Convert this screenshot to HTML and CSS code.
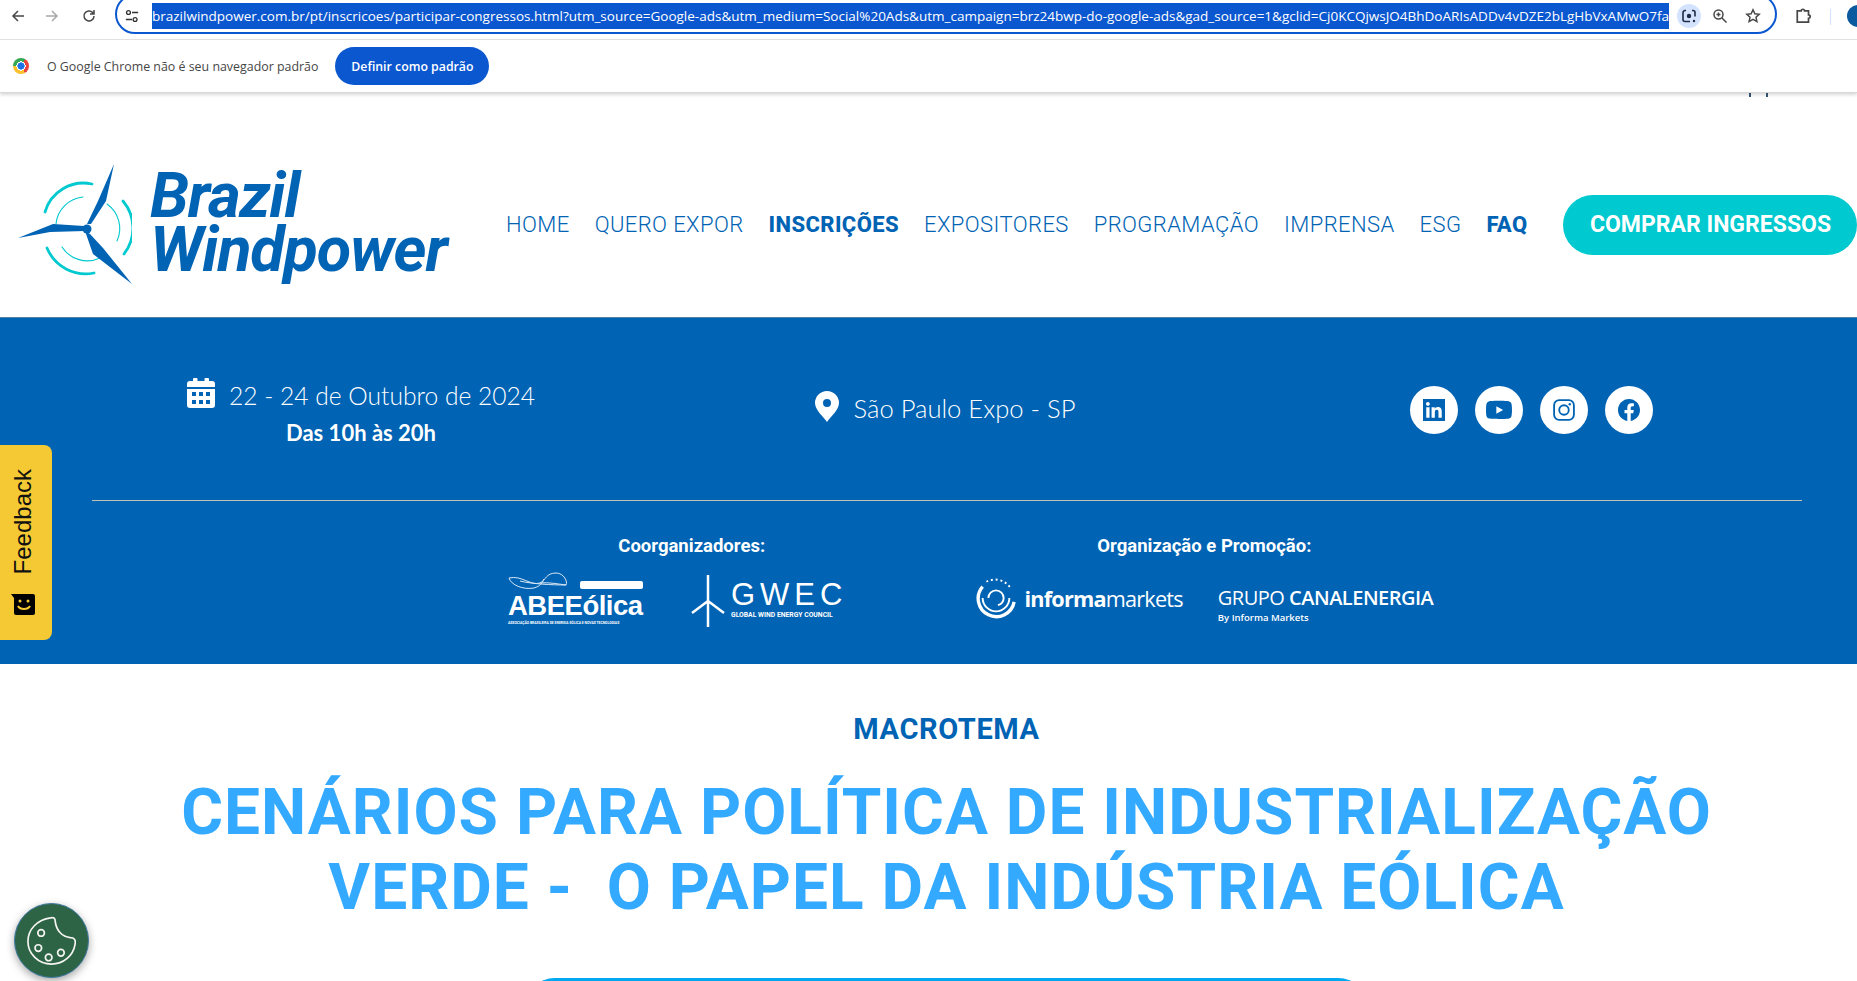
FILE: index.html
```html
<!DOCTYPE html>
<html lang="pt-BR">
<head>
    <meta charset="UTF-8">
    <title>Brazil Windpower</title>
    <link rel="stylesheet" href="styles.css">
</head>
<body>

    <!-- Browser toolbar -->
    <div class="toolbar">
        <svg class="tool-icon back" viewBox="0 0 16 16"><path d="M14 8H3M8 3 3 8l5 5"/></svg>
        <svg class="tool-icon forward" viewBox="0 0 16 16"><path d="M2 8h11M8 3l5 5-5 5"/></svg>
        <svg class="tool-icon reload" viewBox="0 0 16 16"><path d="M13 8a5 5 0 1 1-1.5-3.6L13 6M13 2v4H9"/></svg>
        <div class="address">
            <svg class="tune" viewBox="0 0 16 16"><path d="M8 4h7M1 12h7"/><circle cx="4" cy="4" r="2.200"/><circle cx="11.500" cy="12" r="2.200"/></svg>
            <span class="url"><span class="url-text">brazilwindpower.com.br/pt/inscricoes/participar-congressos.html?utm_source=Google-ads&amp;utm_medium=Social%20Ads&amp;utm_campaign=brz24bwp-do-google-ads&amp;gad_source=1&amp;gclid=Cj0KCQjwsJO4BhDoARIsADDv4vDZE2bLgHbVxAMwO7fa</span></span>
            <span class="lens">
                <svg viewBox="0 0 16 16"><path d="M5 2.500H4A2 2 0 0 0 2 4.500v7a2 2 0 0 0 2 2h1M11 2.500h1a2 2 0 0 1 2 2v4M9 13.500H5"/><circle cx="8" cy="8" r="2.200" class="fill"/><circle cx="13" cy="13" r="1.200" class="fill"/></svg>
            </span>
            <svg class="tool-icon zoom-icon" viewBox="0 0 16 16"><circle cx="6.500" cy="6.500" r="4.500"/><path d="m10 10 4.500 4.500M4.500 6.500h4M6.500 4.500v4"/></svg>
            <svg class="tool-icon star" viewBox="0 0 16 16"><path d="m8 1.800 1.900 4 4.300.5-3.200 3 .9 4.300L8 11.400l-3.900 2.200.9-4.300-3.200-3 4.300-.5z"/></svg>
        </div>
        <svg class="tool-icon puzzle" viewBox="0 0 16 16"><path d="M2 3.500h3.500a1.500 1.500 0 0 1 3 0H12V7a1.500 1.500 0 0 1 0 3v3.500H2z"/></svg>
        <span class="tool-sep"></span>
        <span class="avatar"></span>
    </div>

    <!-- Default browser prompt -->
    <div class="infobar">
        <span class="chrome-logo"></span>
        <span class="infobar-text">O Google Chrome não é seu navegador padrão</span>
        <button class="infobar-btn">Definir como padrão</button>
    </div>

    <!-- Site header -->
    <header class="site-header">
        <div class="peek"><span></span><span></span></div>
        <div class="logo">
            <svg class="logo-mark" viewBox="0 0 114 121">
                <g fill="none" stroke="#00c9cf" stroke-linecap="round">
                    <path d="M27 48A40 40 0 0 1 74 20" stroke-width="2.800"/>
                    <path d="M105 37A42 42 0 0 1 106 90" stroke-width="2.800" />
                    <path d="M29 84A42 42 0 0 0 76 109" stroke-width="2.800"/>
                    <path d="M38 60A30 30 0 0 1 65 33" stroke-width="1.100"/>
                    <path d="M89 40A30 30 0 0 1 99 77" stroke-width="1.100"/>
                    <path d="M44 83A30 30 0 0 0 82 94" stroke-width="1.100"/>
                </g>
                <g fill="#0063b4">
                    <path d="M96 0 88 37 73 60 69 60 80 37z"/>
                    <path d="M0 74 35 60 66 62 67 67 32 68z"/>
                    <path d="M114 120 85 84 72 70 67 67 75 90z"/>
                    <circle cx="69" cy="65" r="4.500"/>
                </g>
            </svg>
            <div class="logo-text">
                <div class="logo-line">Brazil</div>
                <div class="logo-line">Windpower</div>
            </div>
        </div>
        <nav class="nav">
            <a href="#">HOME</a>
            <a href="#">QUERO EXPOR</a>
            <a href="#" class="nav-strong">INSCRIÇÕES</a>
            <a href="#">EXPOSITORES</a>
            <a href="#">PROGRAMAÇÃO</a>
            <a href="#">IMPRENSA</a>
            <a href="#">ESG</a>
            <a href="#" class="nav-strong">FAQ</a>
        </nav>
        <a href="#" class="buy-btn">COMPRAR INGRESSOS</a>
    </header>

    <!-- Event band -->
    <section class="band">
        <div class="event-row">
            <div class="event-date">
                <div class="event-line">
                    <svg class="calendar" viewBox="0 0 28 30">
                        <path d="M7 0h2.500a1 1 0 0 1 1 1v2h7V1a1 1 0 0 1 1-1H21a1 1 0 0 1 1 1v2h3a3 3 0 0 1 3 3v3H0V6a3 3 0 0 1 3-3h3V1a1 1 0 0 1 1-1z"/>
                        <path fill-rule="evenodd" d="M0 11h28v16a3 3 0 0 1-3 3H3a3 3 0 0 1-3-3zM5 14v4h4v-4zm7 0v4h4v-4zm7 0v4h4v-4zM5 22v4h4v-4zm7 0v4h4v-4zm7 0v4h4v-4z"/>
                    </svg>
                    <span>22 - 24 de Outubro de 2024</span>
                </div>
                <div class="event-hours">Das 10h às 20h</div>
            </div>
            <div class="event-place">
                <svg class="pin" viewBox="0 0 24 31">
                    <path fill-rule="evenodd" d="M12 0a12 12 0 0 1 12 12c0 7-8 13-12 19C8 25 0 19 0 12A12 12 0 0 1 12 0zm0 8a4 4 0 1 0 0 8 4 4 0 0 0 0-8z"/>
                </svg>
                <span>São Paulo Expo - SP</span>
            </div>
            <div class="social">
                <a href="#" class="social-link"><svg viewBox="0 0 24 24"><path d="M20.447 20.452h-3.554v-5.569c0-1.328-.027-3.037-1.852-3.037-1.853 0-2.136 1.445-2.136 2.939v5.667H9.351V9h3.414v1.561h.046c.477-.9 1.637-1.850 3.370-1.850 3.601 0 4.267 2.370 4.267 5.455v6.286zM5.337 7.433c-1.144 0-2.063-.926-2.063-2.065 0-1.138.92-2.063 2.063-2.063 1.140 0 2.064.925 2.064 2.063 0 1.139-.925 2.065-2.064 2.065zm1.782 13.019H3.555V9h3.564v11.452zM24 0H0v24h24z" fill-rule="evenodd"/></svg></a>
                <a href="#" class="social-link"><svg viewBox="0 0 24 24" class="wide"><path d="M23.498 6.186a3.016 3.016 0 0 0-2.122-2.136C19.505 3.545 12 3.545 12 3.545s-7.505 0-9.377.505A3.017 3.017 0 0 0 .502 6.186C0 8.070 0 12 0 12s0 3.930.502 5.814a3.016 3.016 0 0 0 2.122 2.136c1.871.505 9.376.505 9.376.505s7.505 0 9.377-.505a3.015 3.015 0 0 0 2.122-2.136C24 15.930 24 12 24 12s0-3.930-.502-5.814zM9.545 15.568V8.432L15.818 12l-6.273 3.568z"/></svg></a>
                <a href="#" class="social-link"><svg viewBox="0 0 24 24" class="outline"><rect x="1.200" y="1.200" width="21.600" height="21.600" rx="5.500"/><circle cx="12" cy="12" r="5.200"/><circle cx="18.300" cy="5.700" r="1.300" class="fill"/></svg></a>
                <a href="#" class="social-link"><svg viewBox="0 0 24 24"><path d="M24 12.073c0-6.627-5.373-12-12-12s-12 5.373-12 12c0 5.990 4.388 10.954 10.125 11.854v-8.385H7.078v-3.470h3.047V9.430c0-3.007 1.792-4.669 4.533-4.669 1.312 0 2.686.235 2.686.235v2.953H15.830c-1.491 0-1.956.925-1.956 1.874v2.250h3.328l-.532 3.470h-2.796v8.385C19.612 23.027 24 18.062 24 12.073z"/></svg></a>
            </div>
        </div>

        <hr class="band-rule">

        <div class="partners">
            <div class="partner-group group-co">
                <div class="partner-label label-co">Coorganizadores:</div>
                <div class="partner-logos">
                    <div class="abee">
                        <div class="abee-top">
                            <svg class="abee-swoosh" viewBox="0 0 60 24">
                                <path d="M1 6C14 3 22 14 32 11 38 8 38 1 48 1 56 1 60 10 58 13 50 12 40 10 32 11M1 6C3 13 15 18 26 16 32 14 34 12 36 7M12 9C24 12 44 13 58 13"/>
                            </svg>
                            <span class="abee-pill"></span>
                        </div>
                        <div class="abee-name">ABEEólica</div>
                        <div class="abee-sub">ASSOCIAÇÃO BRASILEIRA DE ENERGIA EÓLICA E NOVAS TECNOLOGIAS</div>
                    </div>
                    <div class="gwec">
                        <svg class="gwec-mark" viewBox="0 0 36 52">
                            <path d="M18 0v52M18 26 2 38M18 26l16 12"/>
                        </svg>
                        <div>
                            <div class="gwec-name">GWEC</div>
                            <div class="gwec-sub">GLOBAL WIND ENERGY COUNCIL</div>
                        </div>
                    </div>
                </div>
            </div>
            <div class="partner-group group-org">
                <div class="partner-label">Organização e Promoção:</div>
                <div class="partner-logos">
                    <div class="informa">
                        <svg class="informa-mark" viewBox="0 0 44 44">
                            <path d="M8 10A19 19 0 1 0 41 26" stroke-width="3.500"/>
                            <path d="M8 22A14 14 0 0 0 36 22" stroke-width="2"/>
                            <path d="M14 22a8 8 0 0 1 16 0M30 22a8 8 0 0 1-6 7.500" stroke-width="2"/>
                            <path d="M12 5a19 19 0 0 1 26 8" stroke-width="2" stroke-dasharray="2 3"/>
                        </svg>
                        <span class="informa-name"><b>informa</b>markets</span>
                    </div>
                    <div class="canal">
                        <div class="canal-name">GRUPO <b>CANALENERGIA</b></div>
                        <div class="canal-sub">By Informa Markets</div>
                    </div>
                </div>
            </div>
        </div>
    </section>

    <!-- Theme -->
    <main class="theme">
        <h3 class="theme-label">MACROTEMA</h3>
        <h1 class="theme-title">CENÁRIOS PARA POLÍTICA DE INDUSTRIALIZAÇÃO<br>VERDE -&nbsp; O PAPEL DA INDÚSTRIA EÓLICA</h1>
        <div class="theme-cta"></div>
    </main>

    <!-- Floating widgets -->
    <a href="#" class="feedback">
        <span class="feedback-text">Feedback</span>
        <svg class="feedback-icon" viewBox="0 0 24 22">
            <path d="M0 1h22a2 2 0 0 1 2 2v17a2 2 0 0 1-2 2H5a2 2 0 0 1-2-2V5z"/>
            <circle cx="9" cy="8" r="1.500" class="eye"/><circle cx="17" cy="8" r="1.500" class="eye"/>
            <path d="M7 13c2 4 10 4 12 0" class="smile"/>
        </svg>
    </a>

    <button class="cookie">
        <svg viewBox="0 0 52 52">
            <path d="M25 2c3-1 5 0 5 4 1 9 7 16 16 17 4 0 6 2 5 7-2 12-12 21-25 21C12 51 1 40 1 27 1 14 11 4 25 2z"/>
            <circle cx="15" cy="18" r="3.500"/><circle cx="12" cy="34" r="3.500"/><circle cx="23" cy="44" r="3.500"/><circle cx="36" cy="39" r="3.500"/>
        </svg>
    </button>

</body>
</html>
```

FILE: styles.css
```css
:root {
    --blue: #0063b4;
    --teal: #00c9cf;
    --sky: #33a9ff;
    --chrome-blue: #0b57d0;
}

* {
    margin: 0;
    padding: 0;
    box-sizing: border-box;
}

html, body {
    height: 981px;
    overflow: hidden;
}

body {
    background: #fff;
    font-family: 'Roboto', 'Liberation Sans', sans-serif;
    color: var(--blue);
}

a {
    text-decoration: none;
    color: inherit;
}

/* Browser toolbar */
.toolbar {
    height: 40px;
    display: flex;
    align-items: flex-start;
    border-bottom: 1px solid #e3e3e3;
    overflow: hidden;
    padding-left: 10px;
}

.tool-icon {
    width: 16px;
    height: 16px;
    flex: none;
    fill: none;
    stroke: #474747;
    stroke-width: 1.500;
    margin-top: 8px;
}

.forward {
    stroke: #a8a8a8;
    margin-left: 18px;
}

.reload {
    margin-left: 21px;
}

.address {
    flex: none;
    width: 1662px;
    height: 40px;
    margin: -6px 0 0 18px;
    border: 2px solid var(--chrome-blue);
    border-radius: 20px;
    display: flex;
    align-items: center;
    padding: 4px 0 0 8px;
}

.tune {
    width: 14px;
    height: 14px;
    flex: none;
    fill: none;
    stroke: #333;
    stroke-width: 1.500;
}

.url {
    flex: none;
    width: 1517px;
    height: 26px;
    margin-left: 13px;
    background: var(--chrome-blue);
    color: #fff;
    font-family: 'Open Sans', sans-serif;
    font-size: 13.500px;
    line-height: 26px;
    overflow: hidden;
    white-space: nowrap;
}

.lens {
    flex: none;
    width: 24px;
    height: 24px;
    margin-left: 8px;
    border-radius: 50%;
    background: #d3e3fd;
    display: flex;
    align-items: center;
    justify-content: center;
}

.lens svg {
    width: 16px;
    height: 16px;
    fill: none;
    stroke: #1f2a44;
    stroke-width: 1.600;
}

.lens .fill {
    fill: #1f2a44;
    stroke: none;
}

.zoom-icon {
    margin: 0 0 0 11px;
}

.star {
    margin: 0 0 0 17px;
}

.puzzle {
    width: 18px;
    height: 18px;
    margin: 7px 0 0 18px;
}

.tool-sep {
    width: 1px;
    height: 16px;
    margin: 9px 0 0 17px;
    background: #d3e3fd;
    flex: none;
}

.avatar {
    flex: none;
    width: 22px;
    height: 22px;
    margin: 5px 0 0 16px;
    border-radius: 50%;
    background: #0b5aa0;
}

/* Default browser prompt */
.infobar {
    height: 53px;
    display: flex;
    align-items: center;
    padding-left: 13px;
    border-bottom: 1px solid #d8d8d8;
    box-shadow: 0 2px 3px rgba(0, 0, 0, 0.15);
    position: relative;
}

.chrome-logo {
    width: 16px;
    height: 16px;
    border-radius: 50%;
    background-image: radial-gradient(circle, #1a73e8 0 3.500px, #fff 3.600px 4.600px, transparent 4.700px), conic-gradient(from 30deg, #e8453c 0 120deg, #fbc02d 120deg 240deg, #34a853 240deg 360deg);
    flex: none;
}

.infobar-text {
    margin-left: 18px;
    font-family: 'Open Sans', sans-serif;
    font-size: 12.400px;
    color: #474747;
}

.infobar-btn {
    margin-left: 17px;
    width: 154px;
    height: 38px;
    border: none;
    border-radius: 19px;
    background: var(--chrome-blue);
    color: #fff;
    font-family: 'Open Sans', sans-serif;
    font-size: 12.300px;
    font-weight: 600;
}

/* Site header */
.site-header {
    height: 224px;
    padding: 38px 0 0 18px;
    display: flex;
    align-items: center;
    position: relative;
}

.peek {
    position: absolute;
    left: 1749px;
    top: 0;
    display: flex;
    gap: 15px;
}

.peek span {
    width: 2px;
    height: 4px;
    background: #33506e;
}

.logo {
    display: flex;
    align-items: center;
    width: 488px;
    flex: none;
}

.logo-mark {
    width: 114px;
    height: 121px;
    flex: none;
}

.logo-text {
    margin: -2px 0 0 18px;
    font-style: italic;
    font-weight: 700;
    font-size: 63px;
    letter-spacing: -1.200px;
}

.logo-line {
    height: 54px;
    line-height: 54px;
    white-space: nowrap;
}

.nav {
    display: flex;
    gap: 25px;
    font-weight: 300;
    font-size: 22px;
    letter-spacing: 0.400px;
    white-space: nowrap;
    flex: none;
}

.nav-strong {
    font-weight: 800;
}

.buy-btn {
    flex: none;
    width: 294px;
    height: 60px;
    margin: 2px 0 0 36px;
    border-radius: 30px;
    background: var(--teal);
    color: #fff;
    font-weight: 700;
    font-size: 23px;
    line-height: 60px;
    text-align: center;
    white-space: nowrap;
}

/* Event band */
.band {
    height: 347px;
    background: var(--blue);
    border-top: 1px solid #5a7f9f;
    padding: 0 55px 0 92px;
    color: #fff;
}

.event-row {
    height: 182px;
    display: grid;
    grid-template-columns: 538px 630px 1fr;
    align-items: center;
}

.event-date {
    text-align: center;
    margin-top: 8px;
}

.event-line {
    display: flex;
    align-items: center;
    justify-content: center;
    gap: 14px;
    font-family: 'Lato', sans-serif;
    font-weight: 300;
    font-size: 24.600px;
    white-space: nowrap;
}

.calendar {
    width: 28px;
    height: 30px;
    fill: #fff;
    margin-top: -4px;
}

.event-hours {
    margin-top: 9px;
    font-family: 'Lato', sans-serif;
    font-weight: 700;
    font-size: 22px;
}

.event-place {
    display: flex;
    align-items: center;
    justify-content: center;
    gap: 15px;
    margin-top: -3px;
    font-family: 'Lato', sans-serif;
    font-weight: 300;
    font-size: 25.600px;
}

.pin {
    width: 24px;
    height: 31px;
    fill: #fff;
    margin-top: -2px;
}

.social {
    display: flex;
    justify-content: center;
    gap: 17px;
    margin-top: 2px;
}

.social-link {
    width: 48px;
    height: 48px;
    border-radius: 50%;
    background: #fff;
    display: flex;
    align-items: center;
    justify-content: center;
}

.social-link svg {
    width: 22px;
    height: 22px;
    fill: var(--blue);
}

.social-link .wide {
    width: 26px;
    height: 26px;
}

.social-link .outline {
    fill: none;
    stroke: var(--blue);
    stroke-width: 2;
}

.social-link .outline .fill {
    fill: var(--blue);
    stroke: none;
}

.band-rule {
    border: none;
    height: 1px;
    background: #c2c2b4;
}

.partners {
    display: flex;
    padding: 35px 0 0 416px;
    gap: 128px;
}

.partner-label {
    font-size: 18.500px;
    font-weight: 700;
    text-align: center;
    line-height: 20px;
}

.label-co {
    padding-left: 28px;
}

.partner-logos {
    display: flex;
    align-items: flex-start;
    margin-top: 19px;
}

/* Partner logos */
.abee {
    width: 135px;
}

.abee-top {
    display: flex;
    align-items: flex-end;
    height: 16px;
}

.abee-swoosh {
    width: 60px;
    height: 24px;
    margin-bottom: -5px;
    flex: none;
    fill: none;
    stroke: #dbe8f5;
    stroke-width: 1;
}

.abee-pill {
    width: 63px;
    height: 8px;
    margin: 0 0 2px 12px;
    border-radius: 2px;
    background: #fff;
}

.abee-name {
    font-family: 'Liberation Sans', sans-serif;
    font-size: 27.500px;
    font-weight: 700;
    line-height: 30px;
    letter-spacing: -0.500px;
    white-space: nowrap;
}

.abee-sub {
    font-size: 3.400px;
    font-weight: 700;
    white-space: nowrap;
}

.gwec {
    display: flex;
    margin-left: 47px;
    gap: 5px;
    align-items: flex-start;
}

.gwec-mark {
    width: 36px;
    height: 52px;
    fill: none;
    stroke: #fff;
    stroke-width: 2.500;
}

.gwec-name {
    font-family: 'Liberation Sans', sans-serif;
    font-size: 31px;
    line-height: 32px;
    letter-spacing: 5px;
    margin-top: 4px;
    white-space: nowrap;
}

.gwec-sub {
    font-size: 6.800px;
    font-weight: 700;
    white-space: nowrap;
}

.informa {
    display: flex;
    align-items: center;
    gap: 7px;
    margin-top: 2px;
}

.informa-mark {
    width: 42px;
    height: 42px;
    fill: none;
    stroke: #fff;
}

.informa-name {
    font-family: 'Open Sans', sans-serif;
    font-size: 21.700px;
    letter-spacing: -0.800px;
}

.canal {
    margin-left: 35px;
    margin-top: 11px;
}

.canal-name {
    font-family: 'Open Sans', sans-serif;
    font-size: 20px;
    letter-spacing: -0.500px;
    white-space: nowrap;
    line-height: 24px;
}

.canal-name b {
    font-weight: 600;
}

.canal-sub {
    font-family: 'Open Sans', sans-serif;
    font-size: 9.500px;
    margin-top: 1px;
    font-weight: 600;
}

/* Theme */
.theme {
    padding: 47px 0 0 36px;
    text-align: center;
}

.theme-label {
    font-size: 29px;
    font-weight: 700;
    line-height: 36px;
    letter-spacing: 0.600px;
}

.theme-title {
    margin-top: 28px;
    font-size: 64px;
    line-height: 75px;
    font-weight: 700;
    letter-spacing: 1px;
    color: var(--sky);
    white-space: nowrap;
}

.theme-cta {
    width: 843px;
    height: 60px;
    margin: 53px auto 0;
    border-radius: 30px;
    background: #00a8f0;
}

/* Floating widgets */
.feedback {
    position: absolute;
    left: 0;
    top: 445px;
    width: 52px;
    height: 195px;
    background: #f5c933;
    border-radius: 0 8px 8px 0;
    color: #111;
    display: flex;
    flex-direction: column;
    align-items: center;
    padding: 24px 6px 0 0;
}

.feedback-text {
    writing-mode: vertical-rl;
    transform: rotate(180deg);
    font-family: 'Liberation Sans', sans-serif;
    font-size: 24px;
    line-height: 28px;
}

.feedback-icon {
    width: 24px;
    height: 22px;
    margin-top: 19px;
    fill: #000;
}

.feedback-icon .eye {
    fill: #f5c933;
}

.feedback-icon .smile {
    fill: none;
    stroke: #f5c933;
    stroke-width: 2;
}

.cookie {
    position: absolute;
    left: 14px;
    top: 903px;
    width: 75px;
    height: 75px;
    border: 1px solid #3e7aa0;
    border-radius: 50%;
    background: #2e6446;
    box-shadow: 0 3px 8px rgba(0, 0, 0, 0.35);
    display: flex;
    align-items: center;
    justify-content: center;
}

.cookie svg {
    width: 49px;
    height: 49px;
    fill: none;
    stroke: #f4f4f0;
    stroke-width: 1.800;
}
```
